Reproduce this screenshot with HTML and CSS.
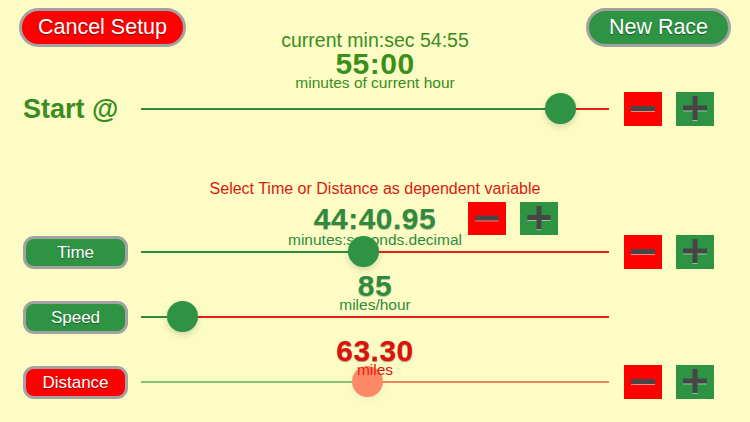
FILE: index.html
```html
<!DOCTYPE html>
<html lang="en">
<head>
<meta charset="utf-8">
<title>Race Setup</title>
<link rel="stylesheet" href="styles.css">
</head>
<body>
<header class="topbar">
  <button class="pill pill-cancel">Cancel Setup</button>
  <div class="clock">
    <div class="clock-now">current min:sec 54:55</div>
    <div class="value value-start">55:00</div>
    <div class="unit">minutes of current hour</div>
  </div>
  <button class="pill pill-new">New Race</button>
</header>

<section class="row row-start">
  <div class="start-label">Start @</div>
  <div class="slider" style="--v:89.7%"><div class="track"></div><div class="thumb"></div></div>
  <div class="steppers">
    <button class="step step-minus"><svg viewBox="0 0 38 34" width="38" height="34"><rect x="7" y="14" width="24" height="5" fill="#464646"/><rect x="7" y="19" width="24" height="1" fill="#e0e0e0" opacity=".6"/></svg></button>
    <button class="step step-plus"><svg viewBox="0 0 38 34" width="38" height="34"><path d="M16.5 4h5v9.5H31v5h-9.5V28h-5v-9.5H7v-5h9.5z" fill="#464646"/><path d="M7 18.5h9.5v1H7zM21.5 18.5H31v1h-9.5zM16.5 28h5v1h-5z" fill="#e0e0e0" opacity=".6"/></svg></button>
  </div>
</section>

<p class="hint">Select Time or Distance as dependent variable</p>

<section class="block block-time">
  <div class="readout">
    <div class="value-line">
      <div class="value">44:40.95</div>
      <div class="steppers steppers-inline">
        <button class="step step-minus"><svg viewBox="0 0 38 34" width="38" height="33"><rect x="7" y="14" width="24" height="5" fill="#464646"/><rect x="7" y="19" width="24" height="1" fill="#e0e0e0" opacity=".6"/></svg></button>
        <button class="step step-plus"><svg viewBox="0 0 38 34" width="38" height="33"><path d="M16.5 4h5v9.5H31v5h-9.5V28h-5v-9.5H7v-5h9.5z" fill="#464646"/><path d="M7 18.5h9.5v1H7zM21.5 18.5H31v1h-9.5zM16.5 28h5v1h-5z" fill="#e0e0e0" opacity=".6"/></svg></button>
      </div>
    </div>
    <div class="unit">minutes:seconds.decimal</div>
  </div>
  <button class="label-btn green">Time</button>
  <div class="slider" style="--v:47.6%"><div class="track"></div><div class="thumb"></div></div>
  <div class="steppers">
    <button class="step step-minus"><svg viewBox="0 0 38 34" width="38" height="34"><rect x="7" y="14" width="24" height="5" fill="#464646"/><rect x="7" y="19" width="24" height="1" fill="#e0e0e0" opacity=".6"/></svg></button>
    <button class="step step-plus"><svg viewBox="0 0 38 34" width="38" height="34"><path d="M16.5 4h5v9.5H31v5h-9.5V28h-5v-9.5H7v-5h9.5z" fill="#464646"/><path d="M7 18.5h9.5v1H7zM21.5 18.5H31v1h-9.5zM16.5 28h5v1h-5z" fill="#e0e0e0" opacity=".6"/></svg></button>
  </div>
</section>

<section class="block block-speed">
  <div class="readout">
    <div class="value">85</div>
    <div class="unit">miles/hour</div>
  </div>
  <button class="label-btn green">Speed</button>
  <div class="slider" style="--v:8.8%"><div class="track"></div><div class="thumb"></div></div>
</section>

<section class="block block-distance">
  <div class="readout readout-red">
    <div class="value">63.30</div>
    <div class="unit">miles</div>
  </div>
  <button class="label-btn red">Distance</button>
  <div class="slider slider-dim" style="--v:48.5%"><div class="track"></div><div class="thumb"></div></div>
  <div class="steppers">
    <button class="step step-minus"><svg viewBox="0 0 38 34" width="38" height="34"><rect x="7" y="14" width="24" height="5" fill="#464646"/><rect x="7" y="19" width="24" height="1" fill="#e0e0e0" opacity=".6"/></svg></button>
    <button class="step step-plus"><svg viewBox="0 0 38 34" width="38" height="34"><path d="M16.5 4h5v9.5H31v5h-9.5V28h-5v-9.5H7v-5h9.5z" fill="#464646"/><path d="M7 18.5h9.5v1H7zM21.5 18.5H31v1h-9.5zM16.5 28h5v1h-5z" fill="#e0e0e0" opacity=".6"/></svg></button>
  </div>
</section>
</body>
</html>
```

FILE: styles.css
```css
* { box-sizing: border-box; }
html, body { margin: 0; padding: 0; }
body {
  width: 750px;
  height: 422px;
  overflow: hidden;
  background: #fcfcc4;
  font-family: "Liberation Sans", Arial, sans-serif;
  color: #3a8c22;
}
button {
  font-family: "Liberation Sans", Arial, sans-serif;
  padding: 0;
  margin: 0;
  cursor: pointer;
}

/* top bar */
.topbar {
  display: grid;
  grid-template-columns: 1fr auto 1fr;
  align-items: start;
  padding: 8px 19px 0;
}
.pill {
  height: 39px;
  border: 3px solid #a2a2a2;
  border-radius: 20px;
  color: #fff;
  font-size: 21.5px;
  line-height: 33px;
  text-shadow: 0 1px 1px rgba(0, 0, 0, 0.45);
}
.pill-cancel { width: 167px; background: #ff0000; justify-self: start; }
.pill-new { width: 145px; background: #2e9444; justify-self: end; }

.clock { margin-top: 22px; text-align: center; white-space: nowrap; }
.clock-now { font-size: 19.5px; line-height: 20px; }

.value {
  font-weight: bold;
  font-size: 30px;
  line-height: 28px;
  letter-spacing: 0.5px;
  color: #2e8b3e;
  text-shadow: 0 1px 1px rgba(0, 0, 0, 0.25);
  white-space: nowrap;
}
.value-start { color: #3a8f1a; text-shadow: none; }
.unit {
  font-size: 15.5px;
  line-height: 14px;
  margin-top: -2px;
  white-space: nowrap;
}

/* rows */
.row {
  display: grid;
  grid-template-columns: 141px 468px 1fr;
  align-items: center;
}
.row-start { height: 34px; margin-top: 2px; }
.start-label {
  padding-left: 23px;
  font-weight: bold;
  font-size: 27px;
  line-height: 34px;
  white-space: nowrap;
}

.slider { position: relative; height: 34px; }
.track {
  position: absolute;
  left: 0;
  right: 0;
  top: 16px;
  height: 2px;
  background: linear-gradient(to right, #2e8b3e var(--v), #e3221a var(--v));
}
.thumb {
  position: absolute;
  top: 1px;
  left: calc(var(--v) - 15.5px);
  width: 31px;
  height: 31px;
  border-radius: 50%;
  background: #2e9444;
  box-shadow: 0 3px 6px rgba(0, 0, 0, 0.15), 0 0 1px rgba(0, 0, 0, 0.1);
}
.slider-dim { opacity: 0.55; }
.slider-dim .thumb { background: #ff2a1a; box-shadow: 0 3px 6px rgba(0, 0, 0, 0.08); }

.steppers { display: flex; gap: 14px; padding-left: 15px; }
.step {
  width: 38px;
  height: 34px;
  border: 0;
  display: flex;
  align-items: center;
  justify-content: center;
}
.step svg { display: block; }
.step-minus { background: #ff0000; }
.step-plus { background: #2e9444; }

/* dependent variable section */
.hint {
  margin: 54px 0 0;
  text-align: center;
  color: #d91a12;
  font-size: 16px;
  line-height: 18px;
}

.block {
  display: grid;
  grid-template-columns: 141px 468px 1fr;
}
.block-time { margin-top: 4px; }
.block-speed, .block-distance { margin-top: 3px; }

.readout {
  grid-column: 2;
  grid-row: 1;
  text-align: center;
  margin-bottom: -12px;
  color: #2e8b3e;
}
.readout-red { color: #e0100c; }
.readout-red .value { color: #e0100c; text-shadow: 0 1px 1px rgba(0, 0, 0, 0.4); }

.value-line {
  display: grid;
  grid-template-columns: 1fr 130px 1fr;
  align-items: center;
}
.value-line .value { grid-column: 2; }
.steppers-inline { grid-column: 3; padding-left: 28px; }
.steppers-inline .step { height: 33px; }

.block .label-btn { grid-column: 1; grid-row: 2; margin-left: 23px; align-self: center; }
.block .slider { grid-column: 2; grid-row: 2; }
.block > .steppers { grid-column: 3; grid-row: 2; align-self: center; }

.label-btn {
  width: 105px;
  height: 33px;
  border: 3px solid #a2a2a2;
  border-radius: 11px;
  color: #fff;
  font-size: 17px;
  line-height: 27px;
  text-shadow: 0 1px 1px rgba(0, 0, 0, 0.45);
}
.green { background: #2e9444; }
.red { background: #ff0000; }
```
